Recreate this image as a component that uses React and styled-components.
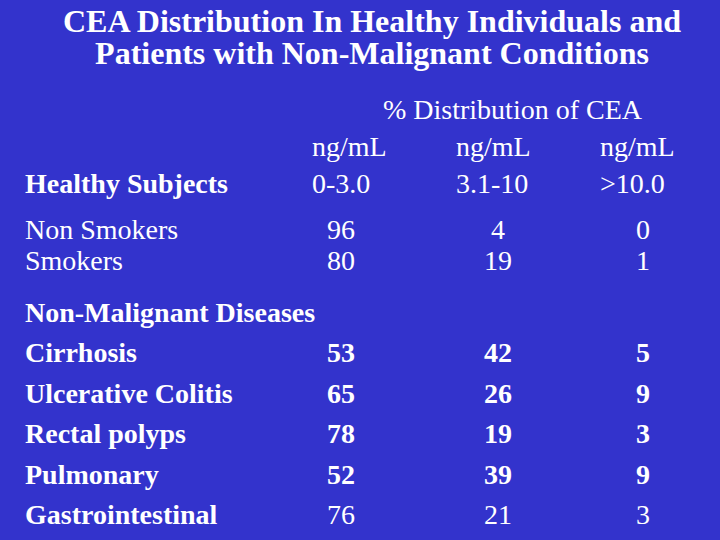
import React from 'react';
import styled, { createGlobalStyle } from 'styled-components';

const GlobalStyle = createGlobalStyle`
  html, body {
    margin: 0;
    padding: 0;
    background: #3333cc;
  }
`;

const Slide = styled.div`
  width: 720px;
  height: 540px;
  background: #3333cc;
  color: #ffffff;
  font-family: "Liberation Serif", "Times New Roman", serif;
  overflow: hidden;
  box-sizing: border-box;
`;

const Title = styled.h1`
  margin: 0;
  padding: 5px 0 0 24px;
  font-size: 32px;
  line-height: 32px;
  font-weight: 700;
  text-align: center;
`;

const Table = styled.div`
  margin-top: 22px;
  padding-left: 25px;
  display: flex;
  flex-direction: column;
`;

const Row = styled.div`
  display: grid;
  grid-template-columns: 287px 144px 144px 1fr;
  height: ${p => p.h || 37}px;
  line-height: ${p => p.h || 37}px;
  margin-top: ${p => p.mt || 0}px;
  font-size: 28px;
  white-space: nowrap;
`;

const Label = styled.div`
  font-weight: ${p => (p.bold ? 700 : 400)};
`;

const Head = styled.div`
  grid-column: ${p => p.span || 'auto'};
  padding-left: ${p => p.indent || 0}px;
`;

const Num = styled.div`
  width: ${p => p.w}px;
  text-align: center;
  font-weight: ${p => (p.bold ? 700 : 400)};
`;

const centers = [58, 84, 86];

const healthy = [
  ['Non Smokers', ['96', '4', '0']],
  ['Smokers', ['80', '19', '1']],
];

const diseases = [
  ['Cirrhosis', ['53', '42', '5'], true],
  ['Ulcerative Colitis', ['65', '26', '9'], true],
  ['Rectal polyps', ['78', '19', '3'], true],
  ['Pulmonary', ['52', '39', '9'], true],
  ['Gastrointestinal', ['76', '21', '3'], false],
];

const DataRow = ({ label, values, boldNums, h, mt, boldLabel }) => (
  <Row h={h} mt={mt}>
    <Label bold={boldLabel}>{label}</Label>
    {values.map((v, i) => (
      <Num key={i} w={centers[i]} bold={boldNums}>{v}</Num>
    ))}
  </Row>
);

export default function App() {
  return (
    <>
      <GlobalStyle />
      <Slide>
        <Title>
          CEA Distribution In Healthy Individuals and
          <br />
          Patients with Non-Malignant Conditions
        </Title>

        <Table>
          <Row>
            <Head span="2 / 5" indent={71}>% Distribution of CEA</Head>
          </Row>
          <Row>
            <Label />
            <Head>ng/mL</Head>
            <Head>ng/mL</Head>
            <Head>ng/mL</Head>
          </Row>
          <Row>
            <Label bold>Healthy Subjects</Label>
            <Head>0-3.0</Head>
            <Head>3.1-10</Head>
            <Head>&gt;10.0</Head>
          </Row>

          {healthy.map(([label, values], i) => (
            <DataRow key={label} label={label} values={values} h={31} mt={i === 0 ? 12 : 0} />
          ))}

          <Row h={40} mt={17}>
            <Label bold>Non-Malignant Diseases</Label>
          </Row>
          {diseases.map(([label, values, bold]) => (
            <DataRow key={label} label={label} values={values} boldNums={bold} boldLabel h={40.5} />
          ))}
        </Table>
      </Slide>
    </>
  );
}
